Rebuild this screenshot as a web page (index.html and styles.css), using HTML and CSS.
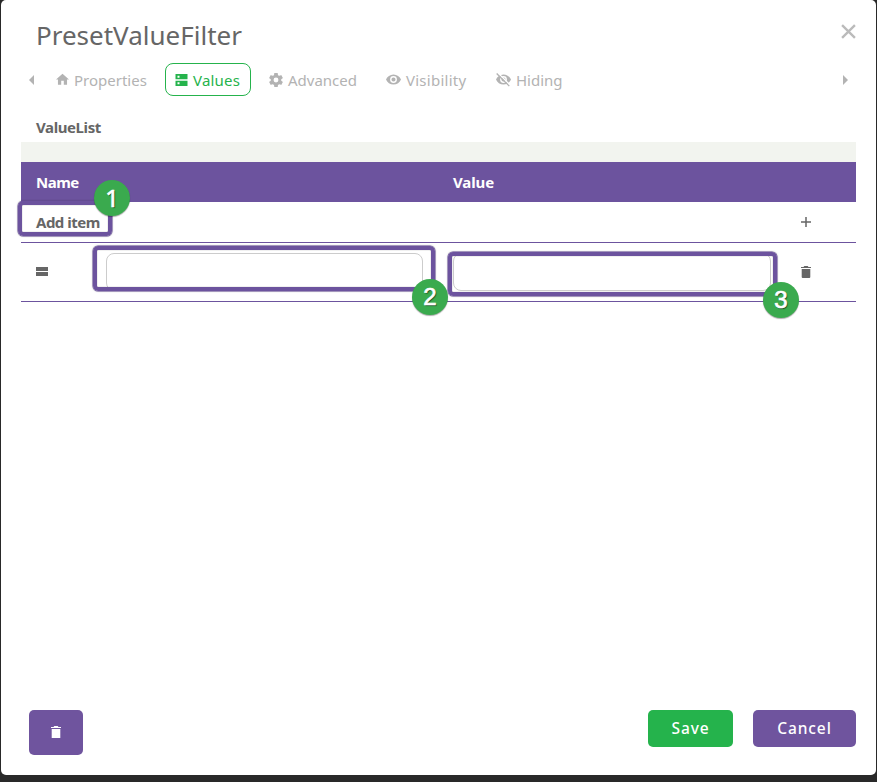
FILE: index.html
```
<!DOCTYPE html>
<html lang="en">
<head>
<meta charset="utf-8">
<title>PresetValueFilter</title>
<link rel="stylesheet" href="styles.css">
</head>
<body>
<main class="modal">
  <header class="header">
    <h1 class="title"><span>PresetValueFilter</span></h1>
    <svg class="close" viewBox="0 0 14 14"><path d="M1 1l12 12M13 1L1 13"/></svg>
  </header>
  <nav class="tabs">
    <svg class="arrow" viewBox="0 0 5 10"><path d="M5 0v10L0 5z"/></svg>
    <div class="tab tab-properties"><svg class="icon" viewBox="2 2 20 20"><path d="M10 20v-6h4v6h5v-8h3L12 3 2 12h3v8z"/></svg><span>Properties</span></div>
    <div class="tab tab-values"><svg class="icon" viewBox="3 3 18 18"><path fill-rule="evenodd" d="M3 3h18v8H3zM3 13h18v8H3zM6 5.500v3h3v-3zM6 15.500v3h3v-3z"/></svg><span>Values</span></div>
    <div class="tab tab-advanced"><svg class="icon" viewBox="2 2 20 20"><path d="M19.430 12.980c.04-.32.07-.64.07-.98s-.03-.66-.07-.98l2.110-1.650c.19-.15.24-.42.12-.64l-2-3.460c-.12-.22-.39-.3-.61-.22l-2.490 1c-.52-.4-1.080-.73-1.690-.98l-.38-2.650C14.460 2.180 14.250 2 14 2h-4c-.25 0-.46.18-.49.42l-.38 2.650c-.61.25-1.170.59-1.690.98l-2.490-1c-.23-.09-.49 0-.61.22l-2 3.460c-.13.22-.07.49.12.64l2.110 1.650c-.04.32-.07.65-.07.98s.03.66.07.98l-2.110 1.650c-.19.15-.24.42-.12.64l2 3.460c.12.22.39.3.61.22l2.490-1c.52.4 1.080.73 1.690.98l.38 2.650c.03.24.24.42.49.42h4c.25 0 .46-.18.49-.42l.38-2.650c.61-.25 1.170-.59 1.690-.98l2.490 1c.23.09.49 0 .61-.22l2-3.460c.12-.22.07-.49-.12-.64l-2.110-1.650zM12 15.500A3.500 3.500 0 1 1 12 8.500a3.500 3.500 0 0 1 0 7z"/></svg><span>Advanced</span></div>
    <div class="tab tab-visibility"><svg class="icon" viewBox="1 1 22 22"><path d="M12 4.500C7 4.500 2.730 7.610 1 12c1.730 4.390 6 7.500 11 7.500s9.270-3.110 11-7.500c-1.730-4.390-6-7.500-11-7.500zM12 17a5 5 0 1 1 0-10 5 5 0 0 1 0 10zm0-8a3 3 0 1 0 0 6 3 3 0 0 0 0-6z"/></svg><span>Visibility</span></div>
    <div class="tab tab-hiding"><svg class="icon" viewBox="1 1 22 22"><path d="M12 4.500C7 4.500 2.730 7.610 1 12c1.730 4.390 6 7.500 11 7.500s9.270-3.110 11-7.500c-1.730-4.390-6-7.500-11-7.500zM12 17a5 5 0 1 1 0-10 5 5 0 0 1 0 10zm0-8a3 3 0 1 0 0 6 3 3 0 0 0 0-6z"/><path class="slash-gap" d="M3.500 2L22 20.500"/><path class="slash" d="M2 3.200L20.500 21.700"/></svg><span>Hiding</span></div>
    <svg class="arrow arrow-next" viewBox="0 0 5 10"><path d="M0 0v10l5-5z"/></svg>
  </nav>
  <section class="list">
    <h2 class="list-title"><span>ValueList</span></h2>
    <div class="strip"></div>
    <div class="row head"><span class="name">Name</span><span class="value">Value</span></div>
    <div class="row add"><span class="add-label">Add item</span><svg class="plus" viewBox="0 0 10 10"><path d="M5 0v10M0 5h10"/></svg></div>
    <div class="row item">
      <svg class="handle" viewBox="0 0 12 9"><path d="M0 0h12v4H0zM0 5h12v4H0z"/></svg>
      <input class="field" type="text" aria-label="Name">
      <input class="field field-value" type="text" aria-label="Value">
      <svg class="trash" viewBox="0 0 10 12"><path d="M0 1h2.500l.8-1h3.400l.8 1H10v1H0zM.7 3h8.600v8q0 1-1 1H1.700q-1 0-1-1z"/></svg>
    </div>
  </section>
  <footer class="footer">
    <button class="btn remove" aria-label="Delete"><svg class="trash" viewBox="0 0 10 12"><path d="M0 1h2.500l.8-1h3.400l.8 1H10v1H0zM.7 3h8.600v9H.7z"/></svg></button>
    <button class="btn save"><span>Save</span></button>
    <button class="btn cancel"><span>Cancel</span></button>
  </footer>
</main>
<div class="callout callout-1"></div>
<div class="callout callout-2"></div>
<div class="callout callout-3"></div>
<div class="badge badge-1">1</div>
<div class="badge badge-2">2</div>
<div class="badge badge-3">3</div>
</body>
</html>
```
FILE: styles.css
```
* { box-sizing: border-box; }
body { margin: 0; height: 782px; padding: 0 1px; overflow: hidden; background: #292929; font: 15px "Noto Sans", sans-serif; color: #666; }
svg { display: block; flex: none; fill: currentColor; }
h1, h2 { margin: 0; }
.modal { height: 775px; background: #fff; border-radius: 5px; padding: 0 20px; display: flex; flex-direction: column; }
.header { height: 63px; display: flex; justify-content: space-between; padding: 17px 0 0 15px; }
.title { font-size: 26px; font-weight: 400; line-height: 37px; }
.close { width: 15px; height: 15px; margin-top: 7px; fill: none; stroke: #bbb; stroke-width: 2.2; }
.tabs { height: 33px; display: flex; align-items: center; color: #b3b3b3; padding-left: 8px; }
.arrow { width: 5px; height: 10px; }
.arrow-next { margin: 0 8px 0 auto; }
.tab { height: 33px; display: flex; align-items: center; gap: 5px; white-space: nowrap; }
.icon { width: 14px; height: 14px; }
.tab-properties { margin-left: 21px; width: 110px; }
.tab-properties .icon { width: 13px; height: 13px; margin-left: 1px; }
.tab-values { width: 86px; padding-left: 9px; border: 1px solid #25b34c; border-radius: 8px; color: #25b34c; letter-spacing: .2px; }
.tab-values .icon { width: 13px; height: 12px; }
.tab-advanced { margin-left: 18px; width: 117px; }
.tab-visibility { width: 110px; letter-spacing: .25px; }
.tab-hiding { width: 80px; }
.tab-visibility .icon, .tab-hiding .icon { width: 15px; height: 15px; }
.slash, .slash-gap { fill: none; stroke: #b3b3b3; stroke-width: 2; }
.slash-gap { stroke: #fff; }
.list-title { height: 46px; padding: 17px 0 0 15px; font-size: 15px; line-height: 28px; letter-spacing: -.4px; }
.strip { height: 20px; background: #f2f4ef; }
.row { display: flex; align-items: center; padding-left: 15px; font-weight: 700; letter-spacing: -.5px; }
.head { height: 40px; background: #6c539e; color: #fff; }
.name { width: 417px; }
.value { letter-spacing: -.1px; }
.add { height: 41px; justify-content: space-between; padding-right: 45px; border-bottom: 1px solid #6c539e; }
.plus { width: 10px; height: 10px; fill: none; stroke: #666; stroke-width: 1.5; }
.item { height: 59px; border-bottom: 1px solid #6c539e; }
.handle { width: 12px; height: 9px; margin: 0 58px 1px 0; }
.field { width: 317px; height: 38px; border: 1px solid #ccc; border-radius: 8px; background: #fff; padding: 0 10px; }
.field-value { width: 318px; margin: 0 30px; }
.trash { width: 10px; height: 12px; }
.footer { margin-top: auto; padding: 0 0 20px 8px; display: flex; align-items: flex-start; }
.btn { height: 37px; padding: 0 0 2px; border: 0; border-radius: 5px; display: flex; align-items: center; justify-content: center; color: #fff; font: 500 15.500px "Noto Sans", sans-serif; letter-spacing: .9px; background: #6f549e; }
.remove { width: 54px; height: 45px; padding-right: 1px; }
.save { width: 85px; margin-left: auto; background: #25b34c; }
.cancel { width: 103px; margin-left: 20px; }
.callout { position: absolute; border: 4px solid #6c539e; border-radius: 5px; box-shadow: 0 0 0 .5px #6c539e, 0 0 2px #0008, inset 0 0 1px #0009; }
.callout-1 { left: 18px; top: 201px; width: 94px; height: 35px; }
.callout-2 { left: 93px; top: 246px; width: 342px; height: 45px; }
.callout-3 { left: 448px; top: 252px; width: 329px; height: 44px; }
.badge { position: absolute; width: 36px; height: 36px; border-radius: 50%; background: #3aaa4e; color: #fff; font: 400 24px/36px "Liberation Sans", sans-serif; -webkit-text-stroke: .7px #fff; text-align: center; text-shadow: 1px 1px 1px #0009; box-shadow: 0 1px 1px #0005; }
.badge-1 { left: 94px; top: 180px; font-family: "Noto Sans", sans-serif; }
.badge-2 { left: 412px; top: 279px; }
.badge-3 { left: 763px; top: 282px; }
```
